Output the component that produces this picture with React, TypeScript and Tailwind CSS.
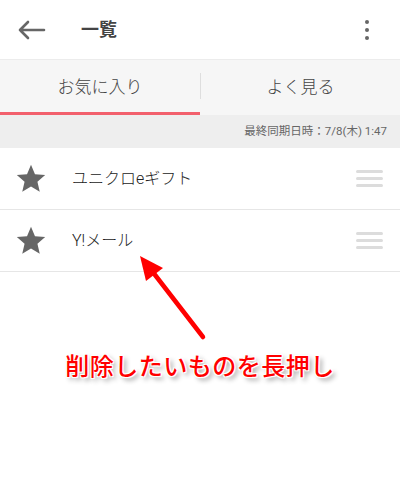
import React from "react";

const font = "font-['Roboto','Noto_Sans_CJK_JP',sans-serif]";

function Star() {
  return (
    <svg width="34" height="34" viewBox="0 0 24 24" className="block">
      <path
        fill="#666"
        d="M12 17.27L18.18 21l-1.64-7.03L22 9.24l-7.19-.61L12 2 9.19 8.63 2 9.24l5.46 4.73L5.82 21z"
      />
    </svg>
  );
}

function Handle() {
  return (
    <div className="flex flex-col gap-[4px] w-[27px]">
      <div className="h-[3px] bg-[#dcdcdc] rounded-full" />
      <div className="h-[3px] bg-[#dcdcdc] rounded-full" />
      <div className="h-[3px] bg-[#dcdcdc] rounded-full" />
    </div>
  );
}

function Row({ label }: { label: string }) {
  return (
    <div className="h-[62px] flex items-center border-b border-[#e6e6e6] pl-[14px] pr-[17px]">
      <Star />
      <div className="ml-[24px] flex-1 text-[16px] font-light text-[#222]">{label}</div>
      <Handle />
    </div>
  );
}

export default function App() {
  return (
    <div className={`relative w-[400px] h-[488px] bg-white overflow-hidden ${font}`}>
      {/* Header */}
      <div className="h-[60px] flex items-center border-b border-[#ececec]">
        <svg width="30" height="20" viewBox="0 0 30 20" className="ml-[17px]">
          <path d="M3 10 H27 M11 2 L3 10 L11 18" fill="none" stroke="#666" strokeWidth="2.6" strokeLinecap="round" strokeLinejoin="round" />
        </svg>
        <div className="ml-[34px] text-[18px] font-bold text-[#444] flex-1">一覧</div>
        <div className="flex flex-col gap-[4px] mr-[31px]">
          <div className="w-[4px] h-[4px] rounded-full bg-[#666]" />
          <div className="w-[4px] h-[4px] rounded-full bg-[#666]" />
          <div className="w-[4px] h-[4px] rounded-full bg-[#666]" />
        </div>
      </div>

      {/* Tabs */}
      <div className="h-[55px] flex bg-[#f6f6f6]">
        <div className="w-[200px] flex items-center justify-center border-b-[3px] border-[#f2606c] text-[17px] font-light text-[#444] pt-[3px]">
          お気に入り
        </div>
        <div className="w-px h-[26px] bg-[#dedede] self-center mb-[3px]" />
        <div className="flex-1 flex items-center justify-center text-[17px] font-light text-[#444]">
          よく見る
        </div>
      </div>

      {/* Sync bar */}
      <div className="h-[33px] bg-[#eeeeee] flex items-center justify-end pr-[13px] text-[11.5px] text-[#666]">
        最終同期日時：7/8(木) 1:47
      </div>

      <Row label="ユニクロeギフト" />
      <Row label="Y!メール" />

      {/* Annotation */}
      <div className="mt-[80px] text-center text-[24px] leading-[30px] font-medium text-[#f00] tracking-[0.5px] [text-shadow:1px_1px_0_#fff,-1px_-1px_0_#fff,1px_-1px_0_#fff,-1px_1px_0_#fff,0_0_3px_#fff,3px_3px_5px_rgba(0,0,0,0.45)]">
        削除したいものを長押し
      </div>

      <svg className="absolute left-0 top-0 pointer-events-none" width="400" height="488">
        <line x1="203" y1="337" x2="152" y2="271" stroke="#f00" strokeWidth="4.5" strokeLinecap="round" />
        <polygon points="140,256 163,268 146,281" fill="#f00" />
      </svg>
    </div>
  );
}
